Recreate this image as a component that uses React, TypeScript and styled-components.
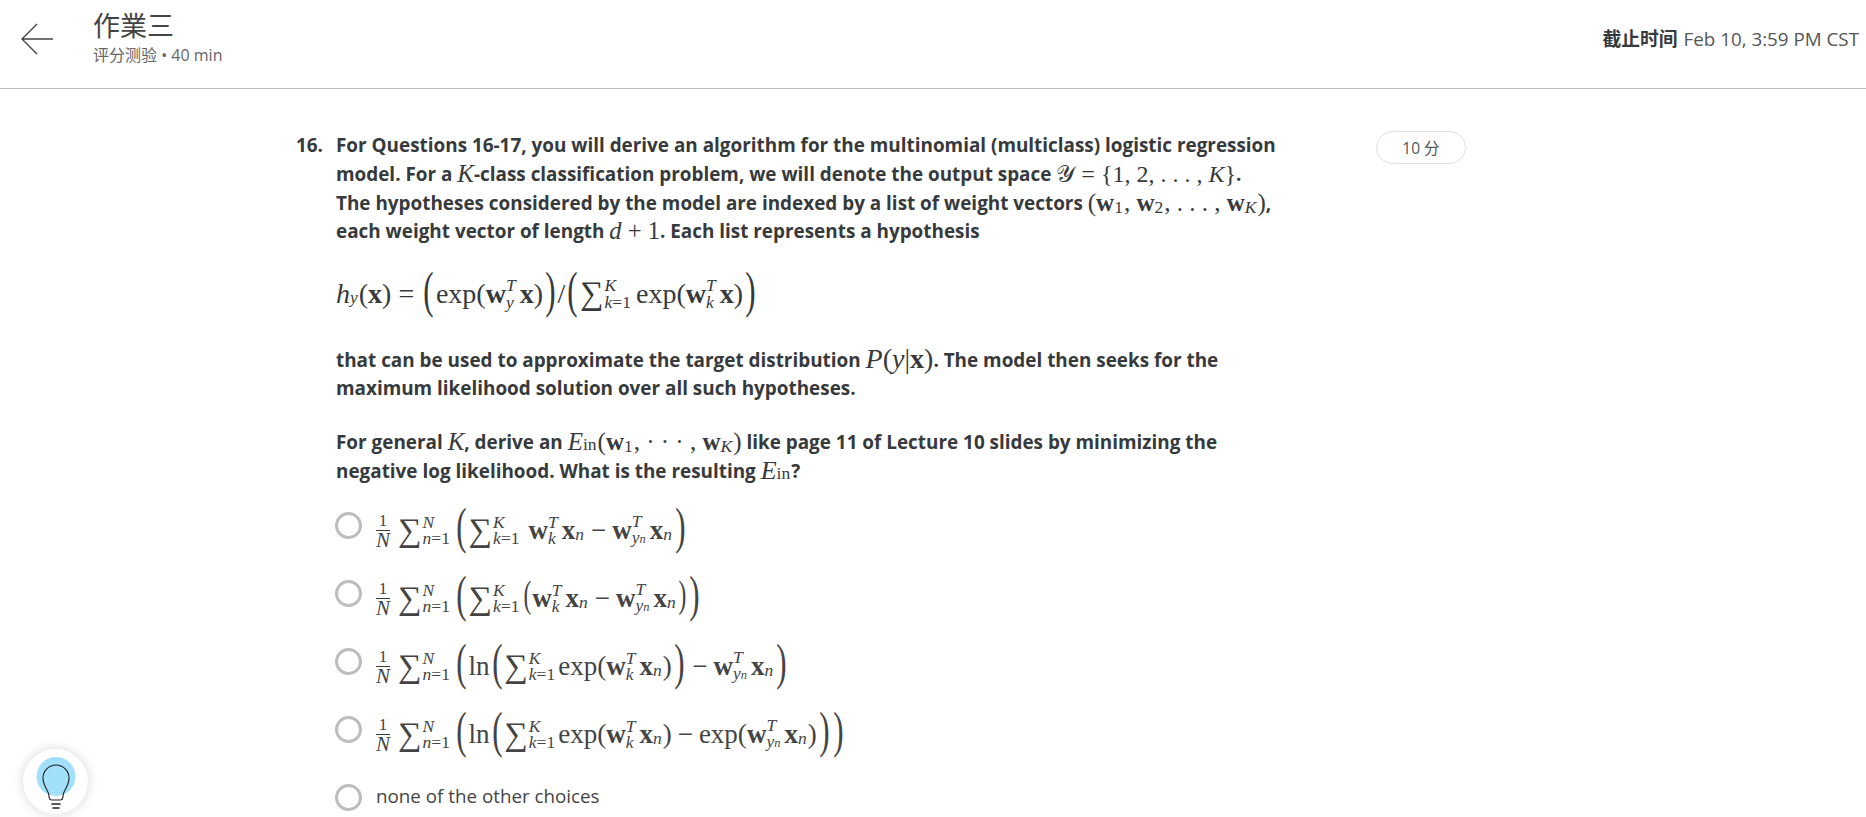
import React from "react";
import styled, { createGlobalStyle } from "styled-components";

const GlobalStyle = createGlobalStyle`
  html, body {
    margin: 0;
    height: 100%;
    overflow: hidden;
    background: #fff;
  }
  body {
    color: #373a3c;
    font-family: "Open Sans", "Noto Sans CJK SC", sans-serif;
  }
`;

const Header = styled.header`
  display: flex;
  align-items: center;
  height: 77px;
  border-bottom: 1px solid #bdbdbd;
  padding: 0 7px 11px 21px;
`;

const BackButton = styled.div`
  display: flex;
  width: 72px;
`;

const TitleBlock = styled.div`
  flex: 1;
`;

const Title = styled.div`
  font-size: 27px;
  line-height: 28px;
  margin-bottom: 5px;
  font-weight: 400;
  font-family: "Noto Sans CJK JP", sans-serif;
  color: #444;
`;

const SubTitle = styled.div`
  font-size: 16px;
  line-height: 22px;
  color: #666;
`;

const Deadline = styled.div`
  font-size: 18.8px;
  color: #555;
  margin-bottom: 2px;
  b {
    color: #373a3c;
    margin-right: 6px;
  }
`;

const Main = styled.main`
  display: flex;
  padding: 42px 0 0 296px;
`;

const Number = styled.div`
  width: 40px;
  font-size: 18.9px;
  font-weight: 700;
  line-height: 28.8px;
`;

const Content = styled.div`
  width: 1040px;
`;

const Paragraph = styled.div<{ $gap?: number }>`
  margin-top: ${(p) => p.$gap ?? 0}px;
  font-size: 18.9px;
  font-weight: 700;
`;

const Line = styled.div`
  height: 28.8px;
  line-height: 28.8px;
  white-space: nowrap;
`;

const Display = styled.div`
  display: flex;
  align-items: center;
  height: 95px;
  padding-bottom: 4px;
`;

const Points = styled.div`
  display: flex;
  align-items: center;
  justify-content: center;
  box-sizing: border-box;
  width: 90px;
  height: 33px;
  border: 1px solid #e1e1e1;
  border-radius: 17px;
  font-size: 15.5px;
  color: #555;
`;

const Options = styled.div`
  display: flex;
  flex-direction: column;
  margin: 5px 0 0 -1px;
`;

const Option = styled.label`
  display: flex;
  align-items: center;
  height: 68px;
  gap: 14px;
  font-size: 18.8px;
  color: #444;
`;

const Radio = styled.span`
  box-sizing: border-box;
  flex: none;
  width: 27px;
  height: 27px;
  border: 3px solid #bdbdbd;
  border-radius: 50%;
  margin-top: 2px;
`;

const Math = styled.span<{ $size?: number }>`
  display: inline-flex;
  align-items: center;
  font-family: "Liberation Serif", "DejaVu Serif", serif;
  font-weight: 400;
  font-size: ${(p) => p.$size ?? 25}px;
  line-height: 1;
  white-space: pre;
  vertical-align: -1px;
`;

const OptionMath = styled(Math)`
  margin-top: 12px;
`;

const Mi = styled.i`
  font-style: italic;
`;

const Mb = styled.b`
  font-weight: 700;
`;

const Stack = styled.span<{ $mr?: number }>`
  display: inline-flex;
  flex-direction: column;
  font-size: 17.5px;
  line-height: 16.5px;
  margin-right: ${(p) => p.$mr ?? 4}px;
`;

const Sub = styled.span<{ $drop?: number }>`
  font-size: 17.5px;
  line-height: 1;
  margin-top: ${(p) => p.$drop ?? 10}px;
  margin-right: 1px;
`;

const SubN = styled.small`
  font-size: 12.5px;
`;

const Frac = styled.span`
  display: inline-flex;
  flex-direction: column;
  align-items: center;
  font-size: 21px;
  line-height: 18px;
  margin-right: 8px;
  span:first-child {
    border-bottom: 1px solid #373a3c;
    align-self: stretch;
    text-align: center;
    font-size: 17px;
  }
`;

const Sigma = styled.span`
  font-size: 33px;
  margin-right: 1px;
`;

const Paren = styled.span<{ $size?: number }>`
  display: inline-block;
  font-size: ${(p) => p.$size ?? 50}px;
  line-height: 42px;
  font-weight: 400;
  transform: translateY(-4px) scaleX(0.62);
  margin: 0 -1px;
`;

const Space = styled.span<{ $w?: number }>`
  display: inline-block;
  width: ${(p) => p.$w ?? 6}px;
`;

const Bulb = styled.div`
  position: fixed;
  left: 23px;
  top: 749px;
  display: flex;
  align-items: center;
  justify-content: center;
  width: 65px;
  height: 65px;
  border-radius: 50%;
  background: #fff;
  box-shadow: 0 0 12px rgba(0, 0, 0, 0.16);
`;

const Wk = ({ sub }: { sub: React.ReactNode }) => (
  <>
    <Mb>w</Mb>
    <Stack>
      <Mi>T</Mi>
      {sub}
    </Stack>
  </>
);

const Yn = () => (
  <Mi>
    y<SubN>n</SubN>
  </Mi>
);

const Xn = () => (
  <>
    <Mb>x</Mb>
    <Sub $drop={8}>
      <Mi>n</Mi>
    </Sub>
  </>
);

const SumK = () => (
  <>
    <Sigma>∑</Sigma>
    <Stack $mr={1}>
      <Mi>K</Mi>
      <span>
        <Mi>k</Mi>=1
      </span>
    </Stack>
  </>
);

const Prefix = () => (
  <>
    <Frac>
      <span>1</span>
      <Mi>N</Mi>
    </Frac>
    <Sigma>∑</Sigma>
    <Stack>
      <Mi>N</Mi>
      <span>
        <Mi>n</Mi>=1
      </span>
    </Stack>
  </>
);

const Minus = () => (
  <>
    <Space />−<Space />
  </>
);

const Ein = () => (
  <>
    <Mi>E</Mi>
    <Sub $drop={7}>in</Sub>
  </>
);

const BackArrow = () => (
  <svg width="33" height="32" viewBox="0 0 33 32" fill="none" stroke="#444" strokeWidth="1.4">
    <path d="M32 16H1.500M16 1L1 16l15 15" />
  </svg>
);

const BulbIcon = () => (
  <svg width="40" height="60" viewBox="0 0 40 60" fill="none">
    <circle cx="20" cy="24.500" r="19.500" fill="#a1dffb" />
    <path
      d="M13 44c0-6-6-9-6-18a13 13 0 0 1 26 0c0 9-6 12-6 18 0 2-1 4-3 4H16c-2 0-3-2-3-4z"
      stroke="#1f1f1f"
      strokeWidth="1.1"
    />
    <path d="M15.500 52h9M16.500 56h7" stroke="#1f1f1f" strokeWidth="1.3" />
  </svg>
);

export default function App() {
  return (
    <>
      <GlobalStyle />
      <Header>
        <BackButton>
          <BackArrow />
        </BackButton>
        <TitleBlock>
          <Title>作業三</Title>
          <SubTitle>评分测验 • 40 min</SubTitle>
        </TitleBlock>
        <Deadline>
          <b>截止时间</b>Feb 10, 3:59 PM CST
        </Deadline>
      </Header>
      <Main>
        <Number>16.</Number>
        <Content>
          <Paragraph>
            <Line>For Questions 16-17, you will derive an algorithm for the multinomial (multiclass) logistic regression</Line>
            <Line>
              model. For a <Math><Mi>K</Mi></Math>-class classification problem, we will denote the output space{" "}
              <Math $size={24}>𝒴 = {"{"}1, 2, . . . , <Mi>K</Mi>{"}"}</Math>.
            </Line>
            <Line>
              The hypotheses considered by the model are indexed by a list of weight vectors{" "}
              <Math $size={25}>
                (<Mb>w</Mb><Sub>1</Sub>, <Mb>w</Mb><Sub>2</Sub>, . . . , <Mb>w</Mb><Sub><Mi>K</Mi></Sub>)
              </Math>
              ,
            </Line>
            <Line>
              each weight vector of length <Math $size={24.5}><Mi>d</Mi> + 1</Math>. Each list represents a hypothesis
            </Line>
          </Paragraph>
          <Display>
            <Math $size={28}>
              <Mi>h</Mi>
              <Sub $drop={9}><Mi>y</Mi></Sub>
              (<Mb>x</Mb>) = <Paren>(</Paren>exp(
              <Wk sub={<Mi>y</Mi>} />
              <Mb>x</Mb>)<Paren>)</Paren>/<Paren>(</Paren>
              <SumK />
              <Space $w={4} />exp(
              <Wk sub={<Mi>k</Mi>} />
              <Mb>x</Mb>)<Paren>)</Paren>
            </Math>
          </Display>
          <Paragraph>
            <Line>
              that can be used to approximate the target distribution{" "}
              <Math $size={28}><Mi>P</Mi>(<Mi>y</Mi>|<Mb>x</Mb>)</Math>. The model then seeks for the
            </Line>
            <Line>maximum likelihood solution over all such hypotheses.</Line>
          </Paragraph>
          <Paragraph $gap={25}>
            <Line>
              For general <Math><Mi>K</Mi></Math>, derive an{" "}
              <Math $size={25}>
                <Ein />(<Mb>w</Mb><Sub>1</Sub>, · · · , <Mb>w</Mb><Sub><Mi>K</Mi></Sub>)
              </Math>{" "}
              like page 11 of Lecture 10 slides by minimizing the
            </Line>
            <Line>
              negative log likelihood. What is the resulting <Math $size={26}><Ein /></Math>?
            </Line>
          </Paragraph>
          <Options>
            <Option>
              <Radio />
              <OptionMath $size={27}>
                <Prefix />
                <Paren>(</Paren>
                <SumK />
                <Space $w={8} />
                <Wk sub={<Mi>k</Mi>} />
                <Xn />
                <Minus />
                <Wk sub={<Yn />} />
                <Xn />
                <Paren>)</Paren>
              </OptionMath>
            </Option>
            <Option>
              <Radio />
              <OptionMath $size={27}>
                <Prefix />
                <Paren>(</Paren>
                <SumK />
                <Space $w={1} />
                <Paren $size={38}>(</Paren>
                <Wk sub={<Mi>k</Mi>} />
                <Xn />
                <Minus />
                <Wk sub={<Yn />} />
                <Xn />
                <Paren $size={38}>)</Paren>
                <Paren>)</Paren>
              </OptionMath>
            </Option>
            <Option>
              <Radio />
              <OptionMath $size={27}>
                <Prefix />
                <Paren>(</Paren>ln<Paren>(</Paren>
                <SumK />
                <Space $w={2} />exp(
                <Wk sub={<Mi>k</Mi>} />
                <Xn />)<Paren>)</Paren>
                <Minus />
                <Wk sub={<Yn />} />
                <Xn />
                <Paren>)</Paren>
              </OptionMath>
            </Option>
            <Option>
              <Radio />
              <OptionMath $size={27}>
                <Prefix />
                <Paren>(</Paren>ln<Paren>(</Paren>
                <SumK />
                <Space $w={2} />exp(
                <Wk sub={<Mi>k</Mi>} />
                <Xn />)
                <Minus />
                exp(
                <Wk sub={<Yn />} />
                <Xn />)<Paren>)</Paren>
                <Paren>)</Paren>
              </OptionMath>
            </Option>
            <Option>
              <Radio />
              none of the other choices
            </Option>
          </Options>
        </Content>
        <Points>10 分</Points>
      </Main>
      <Bulb>
        <BulbIcon />
      </Bulb>
    </>
  );
}
